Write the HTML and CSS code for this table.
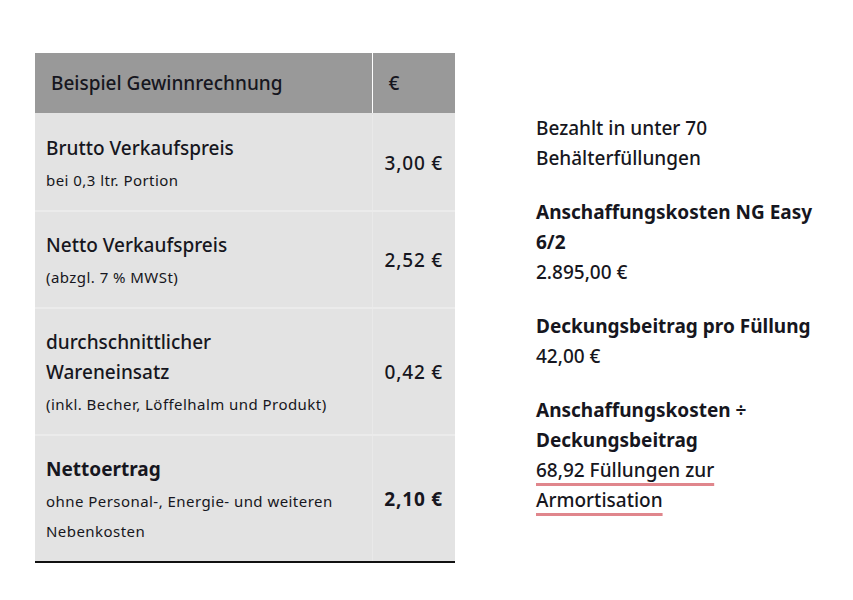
FILE: index.html
```html
<!DOCTYPE html>
<html lang="de">
<head>
<meta charset="utf-8">
<title>Beispiel Gewinnrechnung</title>
<link rel="stylesheet" href="styles.css">
</head>
<body>
<div class="page">
  <table class="calc">
    <colgroup>
      <col class="col-label">
      <col class="col-val">
    </colgroup>
    <thead>
      <tr>
        <th class="c-label">Beispiel Gewinnrechnung</th>
        <th class="c-val">€</th>
      </tr>
    </thead>
    <tbody>
      <tr>
        <td class="c-label"><p class="t">Brutto Verkaufspreis</p><p class="s">bei 0,3 ltr. Portion</p></td>
        <td class="c-val">3,00 €</td>
      </tr>
      <tr>
        <td class="c-label"><p class="t">Netto Verkaufspreis</p><p class="s">(abzgl. 7 % MWSt)</p></td>
        <td class="c-val">2,52 €</td>
      </tr>
      <tr>
        <td class="c-label"><p class="t">durchschnittlicher Wareneinsatz</p><p class="s">(inkl. Becher, Löffelhalm und Produkt)</p></td>
        <td class="c-val">0,42 €</td>
      </tr>
      <tr>
        <td class="c-label"><p class="t strong">Nettoertrag</p><p class="s">ohne Personal-, Energie- und weiteren Nebenkosten</p></td>
        <td class="c-val c-strong">2,10 €</td>
      </tr>
    </tbody>
  </table>
  <div class="side">
    <p class="m">Bezahlt in unter 70 Behälterfüllungen</p>
    <p><strong>Anschaffungskosten NG Easy 6/2</strong><br>2.895,00 €</p>
    <p><strong>Deckungsbeitrag pro Füllung</strong><br>42,00 €</p>
    <p><strong>Anschaffungskosten ÷ Deckungsbeitrag</strong><br><span class="mark">68,92 Füllungen zur Armortisation</span></p>
  </div>
</div>
</body>
</html>
```
FILE: styles.css
```css
html, body {
  margin: 0;
  padding: 0;
  background: #ffffff;
}
body {
  font-family: "Noto Sans", "Open Sans", sans-serif;
  color: #161620;
}
.page {
  display: flex;
  align-items: flex-start;
  padding: 53px 0 0 35px;
}
.calc {
  width: 420px;
  table-layout: fixed;
  border-collapse: collapse;
  border-bottom: 2px solid #111;
}
.col-label {
  width: 337px;
}
.col-val {
  width: 83px;
}
.calc th {
  background: #999999;
  height: 60px;
  padding: 0;
  text-align: left;
  font-size: 19px;
  font-weight: 500;
  vertical-align: middle;
}
.calc th.c-label {
  padding-left: 16px;
  border-right: 1px solid #ffffff;
}
.calc th.c-val {
  padding-left: 16px;
}
.calc td {
  background: #e3e3e3;
  border-top: 2px solid #ebebeb;
  vertical-align: middle;
  padding: 0;
}
.calc tbody tr:first-child td {
  border-top-color: #e3e3e3;
}
.calc td.c-label {
  padding: 18px 36px 15px 11px;
  border-right: 1px solid #e9e9e9;
}
.calc td.c-val {
  padding-right: 12px;
  text-align: right;
  font-size: 19px;
  font-weight: 500;
  letter-spacing: 0.8px;
  white-space: nowrap;
}
.calc td.c-strong {
  font-weight: 700;
}
.calc p {
  margin: 0;
}
.calc .t {
  font-size: 19px;
  line-height: 30px;
  font-weight: 500;
}
.calc .s {
  font-size: 15px;
  line-height: 30px;
  letter-spacing: 0.45px;
  margin-top: 2px;
}
.calc .strong {
  font-weight: 700;
}
.side {
  width: 290px;
  margin-left: 81px;
  padding-top: 60px;
  font-size: 19px;
  line-height: 30px;
  font-weight: 500;
}
.side p {
  margin: 0 0 24px;
}
.side strong {
  font-weight: 700;
}
.mark {
  text-decoration: underline;
  text-decoration-color: #e0868c;
  text-decoration-thickness: 3px;
  text-underline-offset: 6px;
}
```
